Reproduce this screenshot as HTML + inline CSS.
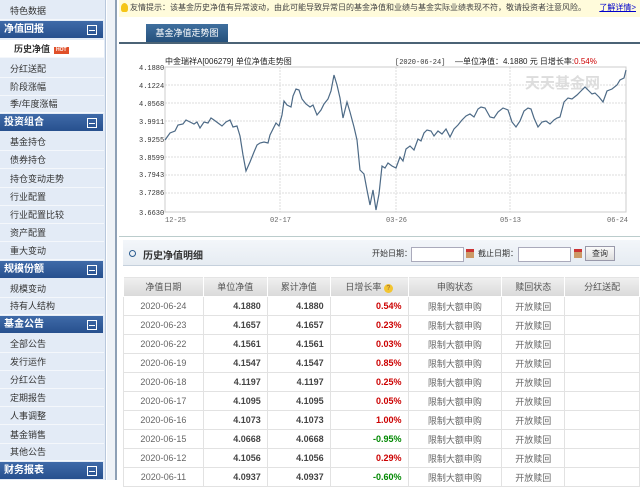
<!DOCTYPE html>
<html><head><meta charset="utf-8"><style>
*{margin:0;padding:0;box-sizing:border-box}
body{width:640px;height:480px;overflow:hidden;background:#fff;font-family:"Liberation Sans","Noto Sans CJK SC",sans-serif;font-size:9px;color:#333;position:relative}
.sb{position:absolute;left:0;top:0;width:106px;height:480px;background:#e3ebf6;border-right:1px solid #b9c8dc}
.it{position:absolute;left:0;width:104px;height:18px;line-height:18px;padding-left:10px;font-size:9px;color:#333;border-bottom:1px solid #f4f7fb}
.hd{position:absolute;left:0;width:103px;height:17px;line-height:17px;padding-left:4px;background:linear-gradient(#3f6aa8,#27508e);color:#fff;font-weight:bold;font-size:10px}
.hd:after{content:"";position:absolute;right:6px;top:4px;width:8px;height:8px;border:1px solid #fff;background:linear-gradient(#fff,#fff) center/6px 1px no-repeat}
.sel{background:#fff;padding-left:14px;font-weight:bold}
.hot{display:inline-block;background:#e0502a;color:#fff;font-size:5px;line-height:7px;padding:0 2px;margin-left:4px;vertical-align:1px}
.gap{position:absolute;left:107px;top:0;width:10px;height:480px;background:#eef2f7;border-right:2px solid #8ea0b5}
.note{position:absolute;left:119px;top:0;width:521px;height:17px;background:#fffbdb;line-height:15px;font-size:8px;color:#444;padding-left:11px}
.note a{color:#00c;text-decoration:underline;position:absolute;right:4px}
.tab{position:absolute;left:146px;top:24px;width:82px;height:19px;background:linear-gradient(#3f6f9e,#244f7a);color:#fff;font-size:9px;line-height:19px;text-align:center}
.tl{position:absolute;left:119px;top:42px;width:521px;height:2px;background:#4b6376}
.s2{position:absolute;left:123px;top:240px;width:517px;height:26px;background:linear-gradient(#f3f6fa,#e6ecf2);border-bottom:1px solid #c5d0dc}
table{position:absolute;left:123px;top:276px;border-collapse:collapse;font-size:9px}
td,th{height:19px;border:1px solid #e2e2e2;padding:0 6px}
th{background:linear-gradient(#f0f0f0,#d9d9d9);font-weight:normal;color:#555;height:20px;border-color:#fff}
td.d{text-align:center;color:#666}td.n{text-align:right;font-weight:bold;color:#444}
td.r{text-align:right;color:#c00;font-weight:bold}td.g{text-align:right;color:#080;font-weight:bold}
td.c{text-align:center;color:#666}
input{position:absolute;height:15px;border:1px solid #aab;background:#fff}
</style></head><body>
<div class="sb">
<div class="it" style="top:2px">特色数据</div>
<div class="hd" style="top:21px">净值回报</div>
<div class="it sel" style="top:40px">历史净值<span class="hot">HOT</span></div>
<div class="it" style="top:60px">分红送配</div>
<div class="it" style="top:78px">阶段涨幅</div>
<div class="it" style="top:95px">季/年度涨幅</div>
<div class="hd" style="top:114px">投资组合</div>
<div class="it" style="top:133px">基金持仓</div>
<div class="it" style="top:151px">债券持仓</div>
<div class="it" style="top:170px">持仓变动走势</div>
<div class="it" style="top:188px">行业配置</div>
<div class="it" style="top:206px">行业配置比较</div>
<div class="it" style="top:224px">资产配置</div>
<div class="it" style="top:242px">重大变动</div>
<div class="hd" style="top:261px">规模份额</div>
<div class="it" style="top:280px">规模变动</div>
<div class="it" style="top:297px">持有人结构</div>
<div class="hd" style="top:316px">基金公告</div>
<div class="it" style="top:335px">全部公告</div>
<div class="it" style="top:353px">发行运作</div>
<div class="it" style="top:371px">分红公告</div>
<div class="it" style="top:389px">定期报告</div>
<div class="it" style="top:407px">人事调整</div>
<div class="it" style="top:426px">基金销售</div>
<div class="it" style="top:443px">其他公告</div>
<div class="hd" style="top:462px">财务报表</div>
</div>
<div class="gap"></div>
<div class="note"><span style="position:absolute;left:2px;top:3px;width:7px;height:9px;background:#f5c518;border-radius:50% 50% 30% 30%"></span>友情提示：该基金历史净值有异常波动，由此可能导致异常日的基金净值和业绩与基金实际业绩表现不符，敬请投资者注意风险。<a>了解详情&gt;</a></div>
<div class="tab">基金净值走势图</div>
<div class="tl"></div>
<svg style="position:absolute;left:119px;top:44px" width="521" height="192" viewBox="119 44 521 192">
<g stroke="#ddd" stroke-dasharray="2,1" stroke-width="1">
<line x1="165" y1="85" x2="626" y2="85"/><line x1="165" y1="103" x2="626" y2="103"/><line x1="165" y1="121" x2="626" y2="121"/><line x1="165" y1="139" x2="626" y2="139"/><line x1="165" y1="157" x2="626" y2="157"/><line x1="165" y1="175" x2="626" y2="175"/><line x1="165" y1="193" x2="626" y2="193"/>
<line x1="280" y1="67" x2="280" y2="212"/><line x1="396" y1="67" x2="396" y2="212"/><line x1="510" y1="67" x2="510" y2="212"/>
</g>
<rect x="165" y="67" width="461" height="145" fill="none" stroke="#ccc"/>
<text x="600" y="88" font-size="15" fill="#ddd" font-weight="bold" text-anchor="end" font-family="Liberation Sans,Noto Sans CJK SC,sans-serif">天天基金网</text>
<polyline fill="none" stroke="#4d6a86" stroke-width="1.2" points="165,140 170,133 175,131 178,125 183,124 186,120 190,122 194,124 197,122 200,128 204,122 208,123 211,118 214,120 218,123 222,126 226,122 230,120 233,127 237,126 240,136 243,155 246,171 250,162 254,152 257,145 260,143 264,142 268,143 270,135 273,129 276,123 279,126 282,115 284,101 287,105 291,107 293,96 296,89 299,90 302,99 306,104 310,107 313,105 317,115 321,110 324,104 328,99 331,91 334,75 337,85 340,98 343,118 347,102 350,112 354,127 357,140 360,170 364,174 367,190 370,205 373,190 376,210 379,194 382,166 385,168 388,163 392,166 396,168 400,157 403,161 406,149 410,146 414,150 418,139 421,141 424,133 427,130 431,131 434,136 438,131 442,134 446,129 450,137 454,129 458,125 462,120 466,116 470,114 474,117 478,109 481,107 485,108 490,117 494,118 498,112 503,108 508,110 512,122 516,127 520,121 524,111 528,108 531,109 534,118 538,127 542,122 546,121 550,124 554,120 557,118 560,117 564,102 568,98 572,99 577,95 581,91 585,87 589,91 592,94 595,93 599,97 603,102 607,91 612,89 617,85 620,80 624,78 626,70"/>
<g font-size="7" fill="#333" font-family="Liberation Mono,monospace">
<text x="139" y="70">4.1880</text><text x="139" y="88">4.1224</text><text x="139" y="106">4.0568</text><text x="139" y="124">3.9911</text><text x="139" y="142">3.9255</text><text x="139" y="160">3.8599</text><text x="139" y="177">3.7943</text><text x="139" y="195">3.7286</text><text x="139" y="215">3.6630</text>
<text x="165" y="222" fill="#666">12-25</text><text x="270" y="222" fill="#666">02-17</text><text x="386" y="222" fill="#666">03-26</text><text x="500" y="222" fill="#666">05-13</text><text x="607" y="222" fill="#666">06-24</text>
<text x="395" y="64">[2020-06-24] </text>
</g>
<text x="165" y="64" font-size="8" fill="#222" font-family="Liberation Sans,Noto Sans CJK SC,sans-serif">中金瑞祥A[006279] 单位净值走势图</text>
<text x="455" y="64" font-size="8" fill="#222" font-family="Liberation Sans,Noto Sans CJK SC,sans-serif">—单位净值：4.1880 元  日增长率:<tspan fill="#c00">0.54%</tspan></text>
</svg>
<div style="position:absolute;left:119px;top:236px;width:521px;height:1px;background:#bcc"></div>
<div class="s2"><span style="position:absolute;left:6px;top:10px;width:7px;height:7px;border:1.5px solid #2a5c90;border-radius:50%"></span><span style="position:absolute;left:20px;top:7px;font-size:10px;font-weight:bold;color:#333">历史净值明细</span>
<span style="position:absolute;left:249px;top:8px;font-size:8px">开始日期：</span><span style="position:absolute;left:355px;top:8px;font-size:8px">截止日期：</span>
<span style="position:absolute;left:462px;top:6px;width:30px;height:15px;border:1px solid #99a;background:linear-gradient(#fafafa,#ddd);font-size:8px;text-align:center;line-height:13px">查询</span></div>
<input style="left:411px;top:247px;width:53px"><span style="position:absolute;left:466px;top:249px;width:8px;height:9px;background:#c96;border-top:3px solid #c33"></span>
<input style="left:518px;top:247px;width:53px"><span style="position:absolute;left:574px;top:249px;width:8px;height:9px;background:#c96;border-top:3px solid #c33"></span>
<table>
<tr><th style="width:80px">净值日期</th><th style="width:64px">单位净值</th><th style="width:63px">累计净值</th><th style="width:78px">日增长率 <span style="display:inline-block;width:9px;height:9px;border-radius:50%;background:#f3c530;font-size:7px;line-height:9px;color:#963">?</span></th><th style="width:94px">申购状态</th><th style="width:63px">赎回状态</th><th style="width:75px">分红送配</th></tr>
<tr><td class="d">2020-06-24</td><td class="n">4.1880</td><td class="n">4.1880</td><td class="r">0.54%</td><td class="c">限制大额申购</td><td class="c">开放赎回</td><td></td></tr>
<tr><td class="d">2020-06-23</td><td class="n">4.1657</td><td class="n">4.1657</td><td class="r">0.23%</td><td class="c">限制大额申购</td><td class="c">开放赎回</td><td></td></tr>
<tr><td class="d">2020-06-22</td><td class="n">4.1561</td><td class="n">4.1561</td><td class="r">0.03%</td><td class="c">限制大额申购</td><td class="c">开放赎回</td><td></td></tr>
<tr><td class="d">2020-06-19</td><td class="n">4.1547</td><td class="n">4.1547</td><td class="r">0.85%</td><td class="c">限制大额申购</td><td class="c">开放赎回</td><td></td></tr>
<tr><td class="d">2020-06-18</td><td class="n">4.1197</td><td class="n">4.1197</td><td class="r">0.25%</td><td class="c">限制大额申购</td><td class="c">开放赎回</td><td></td></tr>
<tr><td class="d">2020-06-17</td><td class="n">4.1095</td><td class="n">4.1095</td><td class="r">0.05%</td><td class="c">限制大额申购</td><td class="c">开放赎回</td><td></td></tr>
<tr><td class="d">2020-06-16</td><td class="n">4.1073</td><td class="n">4.1073</td><td class="r">1.00%</td><td class="c">限制大额申购</td><td class="c">开放赎回</td><td></td></tr>
<tr><td class="d">2020-06-15</td><td class="n">4.0668</td><td class="n">4.0668</td><td class="g">-0.95%</td><td class="c">限制大额申购</td><td class="c">开放赎回</td><td></td></tr>
<tr><td class="d">2020-06-12</td><td class="n">4.1056</td><td class="n">4.1056</td><td class="r">0.29%</td><td class="c">限制大额申购</td><td class="c">开放赎回</td><td></td></tr>
<tr><td class="d">2020-06-11</td><td class="n">4.0937</td><td class="n">4.0937</td><td class="g">-0.60%</td><td class="c">限制大额申购</td><td class="c">开放赎回</td><td></td></tr>
</table>
</body></html>
